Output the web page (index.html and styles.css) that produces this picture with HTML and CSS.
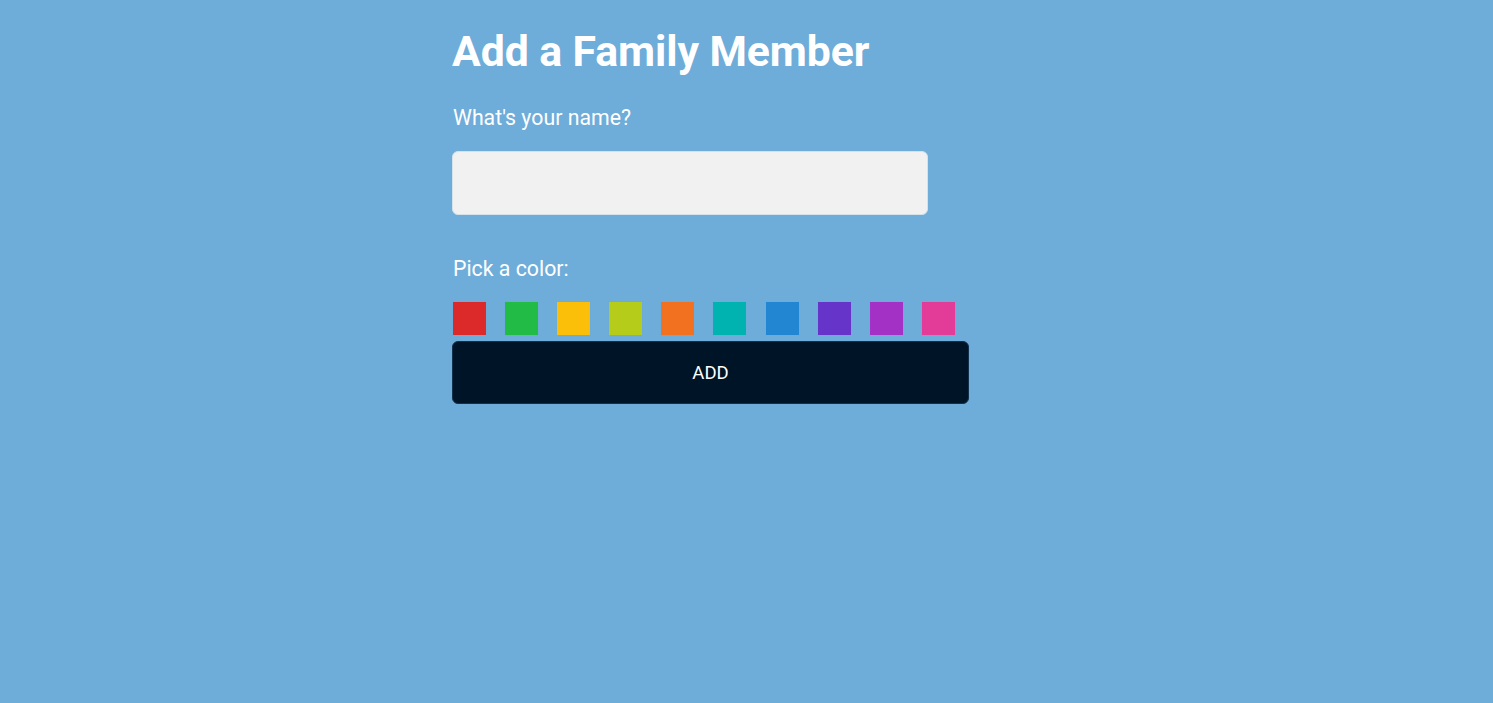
FILE: index.html
```html
<!DOCTYPE html>
<html lang="en">
<head>
<meta charset="utf-8">
<title>Add a Family Member</title>
<link rel="stylesheet" href="styles.css">
</head>
<body>
<main class="page">
  <h1 class="title">Add a Family Member</h1>
  <form class="form">
    <label class="label label-name" for="name">What's your name?</label>
    <input class="name-input" id="name" type="text">
    <p class="label label-color">Pick a color:</p>
    <div class="swatches">
      <span class="swatch red"></span>
      <span class="swatch green"></span>
      <span class="swatch yellow"></span>
      <span class="swatch lime"></span>
      <span class="swatch orange"></span>
      <span class="swatch teal"></span>
      <span class="swatch blue"></span>
      <span class="swatch indigo"></span>
      <span class="swatch violet"></span>
      <span class="swatch pink"></span>
    </div>
    <button class="add-btn" type="button">ADD</button>
  </form>
</main>
</body>
</html>
```
FILE: styles.css
```css
html, body {
  margin: 0;
  padding: 0;
}
body {
  background: #6eacd9;
  font-family: Roboto, "Liberation Sans", Arial, sans-serif;
  color: #ffffff;
  min-height: 100vh;
}
.page {
  width: 589px;
  margin: 0 auto;
  padding-top: 26px;
}
.title {
  margin: 0;
  font-size: 42.8px;
  line-height: 50px;
  font-weight: 700;
  letter-spacing: -0.1px;
}
.form {
  display: flex;
  flex-direction: column;
  align-items: flex-start;
}
.label {
  display: block;
  margin: 0;
  font-size: 21.3px;
  line-height: 25px;
  font-weight: 400;
  padding-left: 1px;
}
.label-name {
  margin-top: 29px;
}
.name-input {
  box-sizing: border-box;
  margin-top: 21px;
  width: 476px;
  height: 64px;
  background: #f1f1f1;
  border: 1px solid #d6e2ea;
  border-radius: 6px;
  font-family: inherit;
  font-size: 20px;
  padding: 0 14px;
  outline: none;
}
.label-color {
  margin-top: 41px;
}
.swatches {
  display: flex;
  gap: 17.1px;
  margin-top: 20px;
}
.swatch {
  display: block;
  width: 35px;
  height: 35px;
  box-sizing: border-box;
  border: 1px solid rgba(110, 172, 217, 0.3);
  background-clip: padding-box;
}
.red { background-color: #dc2a2b; }
.green { background-color: #22bb45; }
.yellow { background-color: #fbbf0a; }
.lime { background-color: #b5cc1b; }
.orange { background-color: #f27121; }
.teal { background-color: #00b3b0; }
.blue { background-color: #2286d2; }
.indigo { background-color: #6634c8; }
.violet { background-color: #a431c6; }
.pink { background-color: #e33b98; }
.add-btn {
  box-sizing: border-box;
  margin-top: 5px;
  width: 517px;
  height: 63px;
  background: #001427;
  border: 1px solid #12314d;
  border-radius: 6px;
  color: #ffffff;
  font-family: inherit;
  font-size: 18.5px;
  cursor: pointer;
}
```
